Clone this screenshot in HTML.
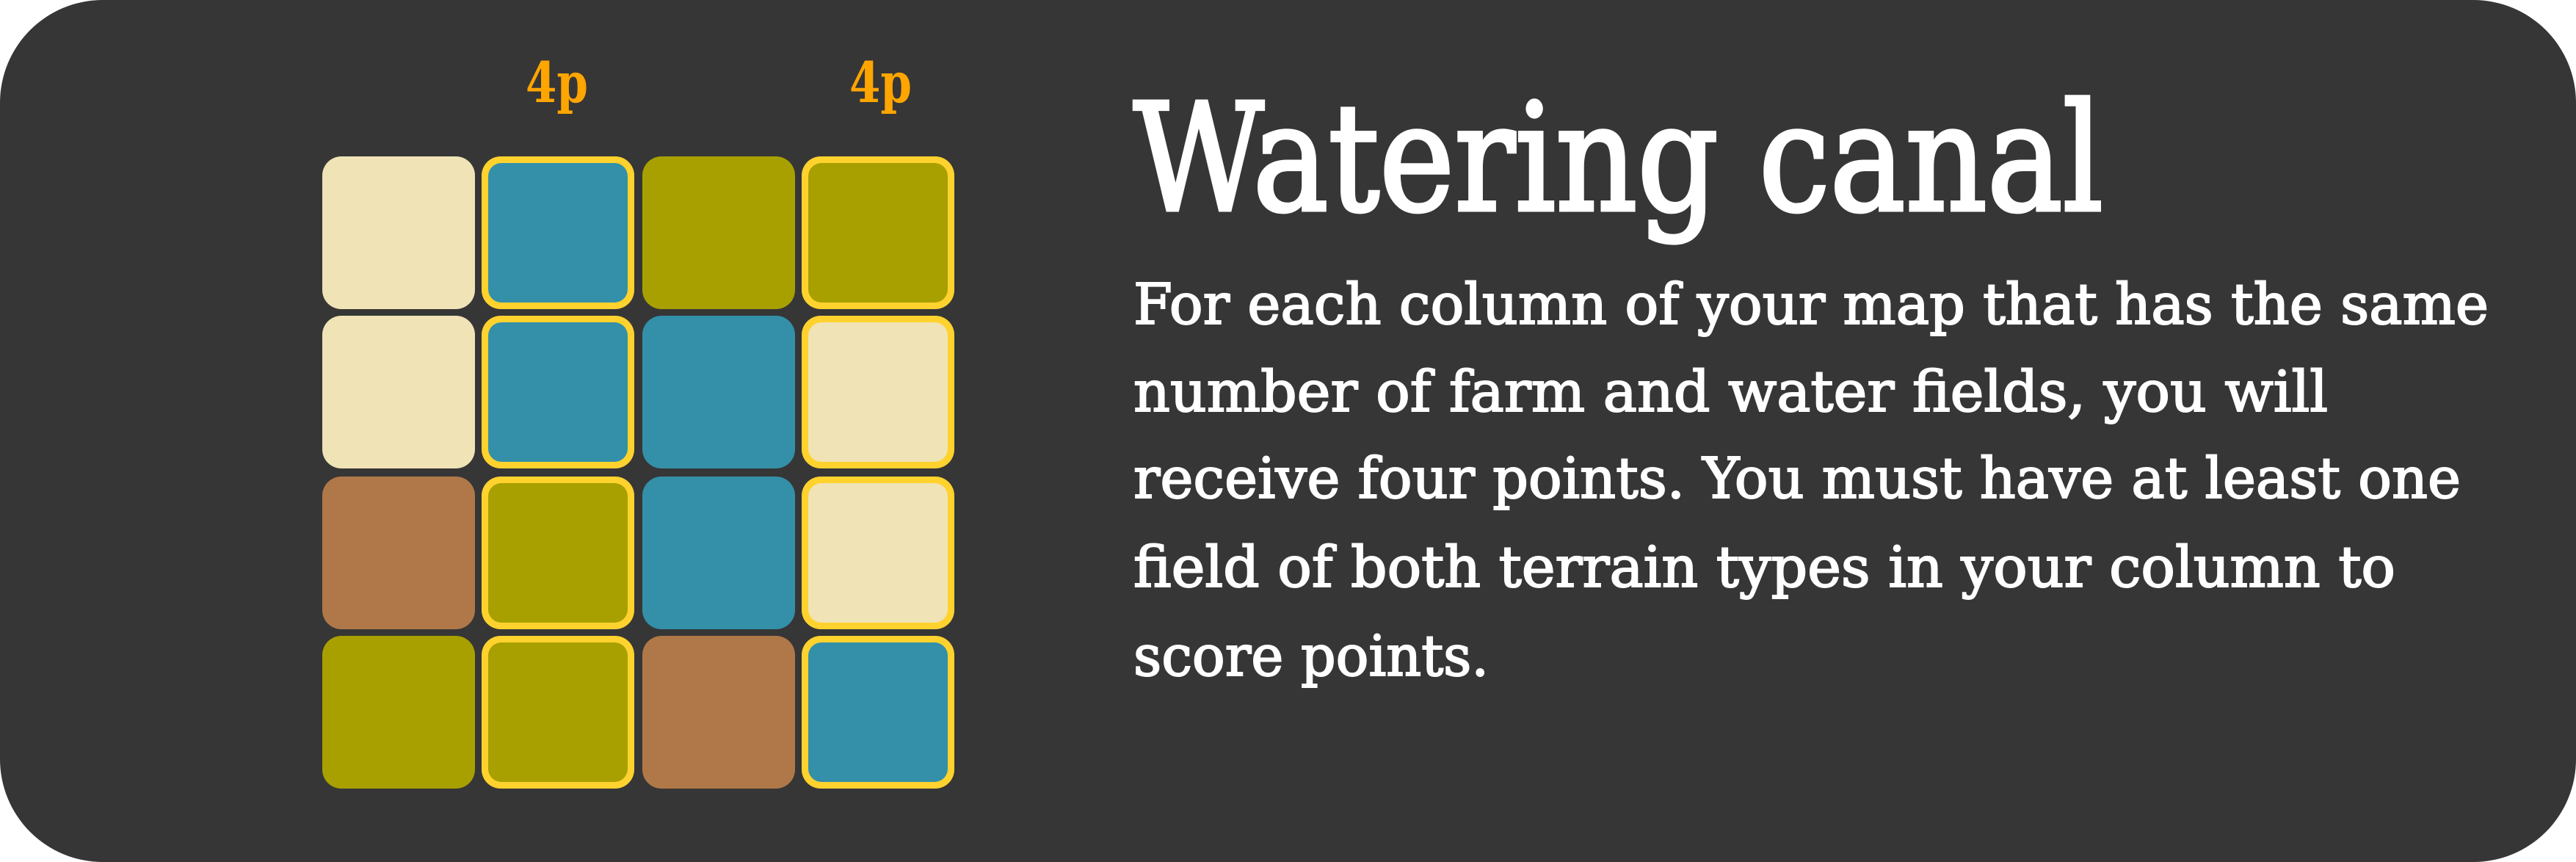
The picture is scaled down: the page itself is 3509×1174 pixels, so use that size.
<!DOCTYPE html>
<html><head><meta charset="utf-8"><style>
html,body{margin:0;padding:0;background:#fff;width:3509px;height:1174px;overflow:hidden}
svg{display:block}
</style></head><body>
<svg width="3509" height="1174" viewBox="0 0 3509 1174" xmlns="http://www.w3.org/2000/svg">
<rect x="0" y="0" width="3509" height="1174" rx="140" ry="140" fill="#363636"/>
<g font-family="'DejaVu Serif', 'Liberation Serif', serif" font-weight="bold" fill="#FFA500" font-size="76">
<text x="716" y="139" textLength="85" lengthAdjust="spacingAndGlyphs">4p</text>
<text x="1157" y="139" textLength="85" lengthAdjust="spacingAndGlyphs">4p</text>
</g>
<g id="grid">
<rect x="439" y="213" width="208" height="208" rx="26" fill="#F0E3B6"/>
<rect x="656" y="213" width="208" height="208" rx="26" fill="#FFD22E"/><rect x="665" y="222" width="190" height="190" rx="18" fill="#3390A8"/>
<rect x="875" y="213" width="208" height="208" rx="26" fill="#A8A000"/>
<rect x="1092" y="213" width="208" height="208" rx="26" fill="#FFD22E"/><rect x="1101" y="222" width="190" height="190" rx="18" fill="#A8A000"/>
<rect x="439" y="430" width="208" height="208" rx="26" fill="#F0E3B6"/>
<rect x="656" y="430" width="208" height="208" rx="26" fill="#FFD22E"/><rect x="665" y="439" width="190" height="190" rx="18" fill="#3390A8"/>
<rect x="875" y="430" width="208" height="208" rx="26" fill="#3390A8"/>
<rect x="1092" y="430" width="208" height="208" rx="26" fill="#FFD22E"/><rect x="1101" y="439" width="190" height="190" rx="18" fill="#F0E3B6"/>
<rect x="439" y="649" width="208" height="208" rx="26" fill="#B07848"/>
<rect x="656" y="649" width="208" height="208" rx="26" fill="#FFD22E"/><rect x="665" y="658" width="190" height="190" rx="18" fill="#A8A000"/>
<rect x="875" y="649" width="208" height="208" rx="26" fill="#3390A8"/>
<rect x="1092" y="649" width="208" height="208" rx="26" fill="#FFD22E"/><rect x="1101" y="658" width="190" height="190" rx="18" fill="#F0E3B6"/>
<rect x="439" y="866" width="208" height="208" rx="26" fill="#A8A000"/>
<rect x="656" y="866" width="208" height="208" rx="26" fill="#FFD22E"/><rect x="665" y="875" width="190" height="190" rx="18" fill="#A8A000"/>
<rect x="875" y="866" width="208" height="208" rx="26" fill="#B07848"/>
<rect x="1092" y="866" width="208" height="208" rx="26" fill="#FFD22E"/><rect x="1101" y="875" width="190" height="190" rx="18" fill="#3390A8"/>
</g>
<g font-family="'DejaVu Serif', 'Liberation Serif', serif" fill="#ffffff" stroke="#ffffff">
<text x="1544" y="286" font-size="203" stroke-width="5" textLength="1321" lengthAdjust="spacingAndGlyphs">Watering canal</text>
<g font-size="77" stroke-width="2">
<text x="1544" y="441" textLength="1846" lengthAdjust="spacingAndGlyphs">For each column of your map that has the same</text>
<text x="1544" y="560" textLength="1627" lengthAdjust="spacingAndGlyphs">number of farm and water fields, you will</text>
<text x="1544" y="678" textLength="1808" lengthAdjust="spacingAndGlyphs">receive four points. You must have at least one</text>
<text x="1544" y="799" textLength="1719" lengthAdjust="spacingAndGlyphs">field of both terrain types in your column to</text>
<text x="1544" y="920" textLength="484" lengthAdjust="spacingAndGlyphs">score points.</text>
</g>
</g>
</svg>
</body></html>
